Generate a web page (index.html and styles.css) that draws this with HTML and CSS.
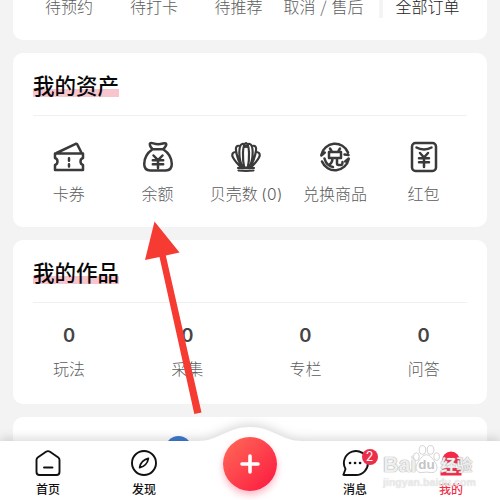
FILE: index.html
```html
<!DOCTYPE html>
<html lang="zh-CN">
<head>
<meta charset="utf-8">
<title>我的</title>
<link rel="stylesheet" href="styles.css">
</head>
<body>
<main class="page">
  <section class="card orders">
    <span>待预约</span><span>待打卡</span><span>待推荐</span><span>取消 / 售后</span>
    <span class="all">全部订单</span>
  </section>

  <section class="card assets">
    <h2><span>我的资产</span></h2>
    <div class="asset-grid">
      <div class="item">
        <svg viewBox="0 0 32 32"><path d="M3 12.600H30V17a3.700 3.700 0 0 0 0 7V29H2V24a3.700 3.700 0 0 0 0-7V12.600zM3.500 12L22.700 2.800q1.200-.4 1.700.8L28.600 12M16 17.300v2.400M16 23.200v2.300"/></svg>
        <span>卡券</span>
      </div>
      <div class="item">
        <svg viewBox="0 0 32 32"><path d="M10.500 8.200C8 5.500 7 3 8.400 2.200c1.800-.8 3.500 1 7.800 1s6-1.800 7.600-.8c1.300 1-.5 3.600-2.600 5.800zM10.500 8.200C5 12 2.200 18 2.200 23c0 4.500 2.600 6.400 6 6.400h15.600c3.400 0 6-1.900 6-6.400 0-5-3-11-8.600-14.800M11.500 14.500l4.500 4.600 4.500-4.600M10.800 19.300h10.400M10.800 23.300h10.400M16 19v8"/></svg>
        <span>余额</span>
      </div>
      <div class="item">
        <svg class="shell" viewBox="0 0 32 32"><path d="M13 27C8 18 8.500 4 12.200 3c1.800-.4 2.800 1 3 2.800M19 27c5-9 4.500-23 .8-24-1.800-.4-2.800 1-3 2.800M16 2c-4 1-3.500 17-1.700 25h3.400C19.500 19 20 3 16 2zM10 5C6.500 4 5.500 6.300 6 9.500 7 17 9.500 22 12.500 27M22 5c3.500-1 4.500 1.300 4 4.500-1 7.500-3.500 12.500-6.500 17.500M5.800 11C2 11 1.600 14 3 16.600 5 20.500 8 23.500 11.500 27M26.200 11c3.800 0 4.200 3 2.800 5.600-2 3.900-5 6.900-8.500 10.400M8 27c4.500-.5 11.500-.5 16 0M8.500 29.500c5 .6 10 .6 15 0"/></svg>
        <span>贝壳数 <span class="num">(0)</span></span>
      </div>
      <div class="item">
        <svg viewBox="0 0 32 32"><path d="M2.300 14A14 14 0 0 1 29 11.500M29.700 18A14 14 0 0 1 3 20.500M2.300 14.500l3.500-3M29.700 17.500l-3.500 3M5.500 17.500C7 23 10 25.500 14 26M25.500 13.500l4 .5M11 7.500l1.500 2.500M21 7.500L19.500 10M10 11h12v6H10zM13.500 17c0 4-1.500 6-4 7M18 17v5.500q0 1.500 1.500 1.500H22q1.500 0 1.500-3"/></svg>
        <span>兑换商品</span>
      </div>
      <div class="item">
        <svg viewBox="0 0 32 32"><rect x="4" y="2" width="24" height="28" rx="3.500"/><path d="M8.500 6.500c4 2.500 11 2.500 15 0M12 12l4 4.500 4-4.500M11 17.300h10M11 21.300h10M16 17v9"/></svg>
        <span>红包</span>
      </div>
    </div>
  </section>

  <section class="card works">
    <h2><span>我的作品</span></h2>
    <div class="work-grid">
      <div class="item"><b>0</b><span>玩法</span></div>
      <div class="item"><b>0</b><span>采集</span></div>
      <div class="item"><b>0</b><span>专栏</span></div>
      <div class="item"><b>0</b><span>问答</span></div>
    </div>
  </section>

  <section class="card next"><i class="blue-dot"></i></section>
</main>

<nav class="tabbar">
  <svg class="bar-shape" viewBox="0 0 500 90"><path d="M0 31H198C219 31 227 17 250 17s31 14 52 14H500V90H0z"/></svg>
  <div class="tab">
    <svg viewBox="0 0 28 28"><path d="M2.500 11q0-1.500 1.200-2.500L12 2.800q2-1.300 4 0l8.300 5.700q1.200 1 1.200 2.500V23q0 3-3 3h-17q-3 0-3-3zM10 18.500h8.500"/></svg>
    <span>首页</span>
  </div>
  <div class="tab">
    <svg viewBox="0 0 28 28"><circle cx="14" cy="14" r="12"/><path d="M18.300 9.500c-4 .8-8 4-8.600 9 4-.8 8-4 8.600-9z"/></svg>
    <span>发现</span>
  </div>
  <div class="add"><svg viewBox="0 0 54 54"><path d="M27 19v16M19 27h16"/></svg></div>
  <div class="tab">
    <svg viewBox="0 0 28 28"><path d="M2.500 25.500L4.500 20A12 12 0 1 1 14 26H3q-.8 0-.5-.5z"/><path class="dots" d="M9 14h.1M14 14h.1M19 14h.1"/></svg>
    <span>消息</span><em>2</em>
  </div>
  <div class="tab active">
    <svg viewBox="0 0 28 28"><path d="M5 12a9 9.500 0 0 1 18 0v2.500H5zM3.500 24q0-4 5-5h11q5 1 5 5v2.500h-21z"/></svg>
    <span>我的</span>
  </div>
</nav>

<div class="watermark">
  <div class="brand"><span class="bai">Bai</span><svg viewBox="0 0 28 32"><ellipse cx="3.500" cy="12" rx="3" ry="4"/><ellipse cx="9.800" cy="5" rx="3.400" ry="4.500"/><ellipse cx="18.200" cy="5" rx="3.400" ry="4.500"/><ellipse cx="24.500" cy="12" rx="3" ry="4"/><path d="M14 10c4 0 6 4 9 8 4 6 1 11-4 10.500q-5-1-10 0C4 29 1 24 5 18c3-4 5-8 9-8z"/><text x="14" y="25">du</text></svg><span class="jy">经验</span></div>
  <div class="url">jingyan.baidu.com</div>
</div>

<svg class="arrow" viewBox="0 0 500 500"><path d="M154.500 221.500L179.500 252.500 165.800 255.500 201.500 412.500 194.300 414 159.500 257 145 260z"/></svg>
</body>
</html>
```
FILE: styles.css
```css
* { box-sizing: border-box; }
body {
  margin: 0;
  width: 500px;
  height: 500px;
  overflow: hidden;
  position: relative;
  background: #f3f3f3;
  color: #5c5c5c;
  font-family: "Noto Sans CJK SC", sans-serif;
  font-weight: 300;
  font-size: 16px;
  line-height: 22px;
}
.page {
  display: flex;
  flex-direction: column;
  gap: 13px;
  padding: 0 13px;
}
.card { background: #fff; border-radius: 10px; }
.orders {
  height: 40px;
  border-radius: 0 0 10px 10px;
  display: grid;
  grid-template-columns: 85px 85px 84px 86px 1fr;
  padding: 0 13.500px;
  line-height: 12px;
  text-align: center;
  white-space: nowrap;
}
.orders span:nth-child(4) { word-spacing: 1.200px; }
.orders .all {
  height: 18px;
  border-left: 4px solid #f4f4f4;
  margin-left: 12px;
  color: #222;
  text-align: left;
  padding-left: 13px;
}
.assets { height: 174px; padding-top: 19px; }
.works { height: 164px; padding-top: 19px; }
h2 {
  margin: 0 20px;
  height: 43.500px;
  border-bottom: 1px solid #f0f0f0;
  font-size: 21.500px;
  line-height: 26px;
  font-weight: 500;
  color: #080808;
}
h2 span {
  display: inline-block;
  height: 25px;
  background: linear-gradient(#f8c5cf, #f8c5cf) 0 17px / 100% 8px no-repeat;
}
.asset-grid {
  display: grid;
  grid-template-columns: repeat(5, 88.700px);
  margin: 25px 0 0 11.500px;
}
.item {
  display: flex;
  flex-direction: column;
  align-items: center;
  white-space: nowrap;
}
.num { font-family: Inter, sans-serif; font-size: 15.500px; letter-spacing: .4px; }
.asset-grid svg {
  width: 32px;
  height: 32px;
  margin-bottom: 9px;
  fill: none;
  stroke: #3a3a3a;
  stroke-width: 2.500;
  stroke-linecap: round;
  stroke-linejoin: round;
}
.asset-grid .shell { stroke-width: 2.200; }
.work-grid {
  display: grid;
  grid-template-columns: repeat(4, 118.200px);
  margin: 21px 0 0 -3px;
}
.work-grid b {
  height: 33px;
  font-family: Inter, sans-serif;
  font-size: 18.500px;
  font-weight: 600;
  color: #444;
}
.next { height: 83px; padding: 19px 0 0 152px; }
.blue-dot {
  display: block;
  width: 27px;
  height: 27px;
  border-radius: 50%;
  background: #3e7bd0;
}
.tabbar {
  position: absolute;
  left: 0;
  top: 410px;
  width: 500px;
  height: 90px;
  display: grid;
  grid-template-columns: 96px 96px 116px 94px 98px;
  justify-items: center;
}
.bar-shape {
  position: absolute;
  inset: 0;
  width: 500px;
  height: 90px;
  fill: #fff;
  overflow: visible;
  filter: drop-shadow(0 -3px 5px rgba(0, 0, 0, .14));
}
.tab {
  position: relative;
  display: flex;
  flex-direction: column;
  align-items: center;
  padding-top: 39px;
  font-size: 12px;
  line-height: 18px;
  font-weight: 500;
  color: #111;
}
.tab svg {
  width: 28px;
  height: 28px;
  margin-bottom: 3px;
  fill: none;
  stroke: #111;
  stroke-width: 1.900;
  stroke-linecap: round;
  stroke-linejoin: round;
}
.tab .dots { stroke-width: 2.600; }
.tab.active { color: #ee2f4b; }
.tab.active svg { fill: #f52846; stroke: none; }
.tab em {
  position: absolute;
  left: 20.500px;
  top: 38.500px;
  width: 16px;
  height: 16px;
  border-radius: 50%;
  background: #ed2e49;
  color: #fff;
  font: 400 12.500px/16px Inter, sans-serif;
  text-align: center;
}
.add {
  position: relative;
  width: 54px;
  height: 54px;
  margin-top: 27px;
  border-radius: 50%;
  background: linear-gradient(135deg, #ff6c58, #fc1740);
  box-shadow: 0 4px 7px rgba(253, 30, 70, .3);
}
.add svg { display: block; stroke: #fff; stroke-width: 3.600; stroke-linecap: round; }
.watermark {
  position: absolute;
  left: 383px;
  top: 445px;
  color: rgba(255, 255, 255, .85);
  text-shadow: 0 0 1px #999, 0 0 1px #aaa;
}
.brand { display: flex; align-items: flex-end; height: 31px; }
.bai { font: 700 21.500px/22px "Liberation Sans", sans-serif; }
.jy { font: 700 16px/23px "Noto Sans CJK SC", sans-serif; }
.brand svg { width: 27px; height: 31px; margin-left: -3px; fill: #fff; stroke: #ccc; stroke-width: .9; }
.brand text { font: 700 14px "Liberation Sans", sans-serif; text-anchor: middle; fill: #c4c4c4; stroke: none; text-shadow: none; }
.url {
  margin-top: 1px;
  font: 700 10.600px/11px "Liberation Sans", sans-serif;
  color: rgba(255, 255, 255, .5);
  text-shadow: 0 0 1px #ccc;
}
.arrow {
  position: absolute;
  left: 0;
  top: 0;
  width: 500px;
  height: 500px;
  fill: #f53b32;
  pointer-events: none;
}
```
